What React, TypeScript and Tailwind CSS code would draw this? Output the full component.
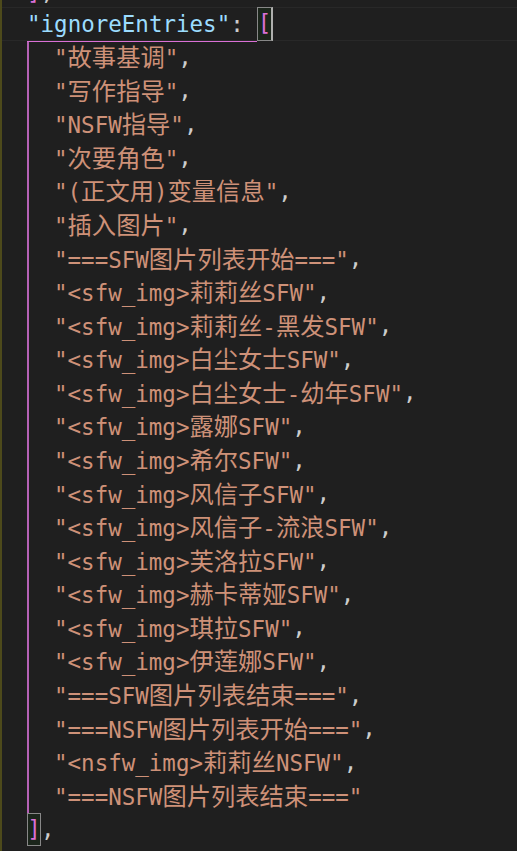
import React from 'react';

const entries = [
  '故事基调',
  '写作指导',
  'NSFW指导',
  '次要角色',
  '(正文用)变量信息',
  '插入图片',
  '===SFW图片列表开始===',
  '<sfw_img>莉莉丝SFW',
  '<sfw_img>莉莉丝-黑发SFW',
  '<sfw_img>白尘女士SFW',
  '<sfw_img>白尘女士-幼年SFW',
  '<sfw_img>露娜SFW',
  '<sfw_img>希尔SFW',
  '<sfw_img>风信子SFW',
  '<sfw_img>风信子-流浪SFW',
  '<sfw_img>芙洛拉SFW',
  '<sfw_img>赫卡蒂娅SFW',
  '<sfw_img>琪拉SFW',
  '<sfw_img>伊莲娜SFW',
  '===SFW图片列表结束===',
  '===NSFW图片列表开始===',
  '<nsfw_img>莉莉丝NSFW',
  '===NSFW图片列表结束===',
];

const splitCjk = (text: string) => text.split(/([\u3000-\u9fff\uff00-\uffef]+)/).filter(Boolean);

const StringToken = ({ text }: { text: string }) => (
  <span className="text-[#ce9178]">
    "
    {splitCjk(text).map((part, i) =>
      /[\u3000-\u9fff\uff00-\uffef]/.test(part) ? (
        <span key={i} className="text-[24.3px] font-['Noto_Sans_CJK_SC',sans-serif]">
          {part}
        </span>
      ) : (
        <span key={i}>{part}</span>
      )
    )}
    "
  </span>
);

const BracketBox = ({ char, cursor }: { char: string; cursor?: boolean }) => (
  <span
    className={
      cursor
        ? 'flex items-center justify-center w-[15.5px] -my-px border border-[#888888] border-r-2 border-r-[#aeafad] bg-[#0064001a] text-[#da70d6]'
        : 'flex items-center justify-center w-[14px] border border-[#888888] bg-[#0064001a] text-[#da70d6]'
    }
  >
    {char}
  </span>
);

const App: React.FC = () => {
  return (
    <div className="h-[851px] w-full overflow-hidden bg-[#1f1f1f] border-l-2 border-[#4d4a1b] text-[22.5px] leading-[33.58px] font-['DejaVu_Sans_Mono','Noto_Sans_CJK_SC',monospace] whitespace-pre">
      <div className="-mt-[26.58px]">
        {/* tail of the previous array, scrolled mostly out of view */}
        <div className="h-[33.58px] flex items-center pl-[25px] pt-[6px]">
          <span className="text-[#da70d6]">]</span>
          <span className="text-[#cccccc]">,</span>
        </div>

        {/* current line */}
        <div className="h-[33.58px] box-border border-y border-[#282828] pl-[25px] flex items-stretch">
          <span className="flex items-center -mb-[2px] border-b border-[#da70d6]">
            <span className="text-[#9cdcfe]">"ignoreEntries"</span>
            <span className="text-[#cccccc]">: </span>
          </span>
          <BracketBox char="[" cursor />
        </div>

        {/* array body with the bracket pair guide */}
        <div className="ml-[25px] border-l-2 border-[#b562b5] pl-[25px]">
          {entries.map((e, i) => (
            <div key={i} className="h-[33.58px] flex items-center">
              <StringToken text={e} />
              {i < entries.length - 1 && <span className="text-[#cccccc]">,</span>}
            </div>
          ))}
        </div>

        <div className="h-[33.58px] flex items-stretch pl-[25px]">
          <BracketBox char="]" />
          <span className="flex items-center text-[#cccccc]">,</span>
        </div>
      </div>
    </div>
  );
};

export default App;
